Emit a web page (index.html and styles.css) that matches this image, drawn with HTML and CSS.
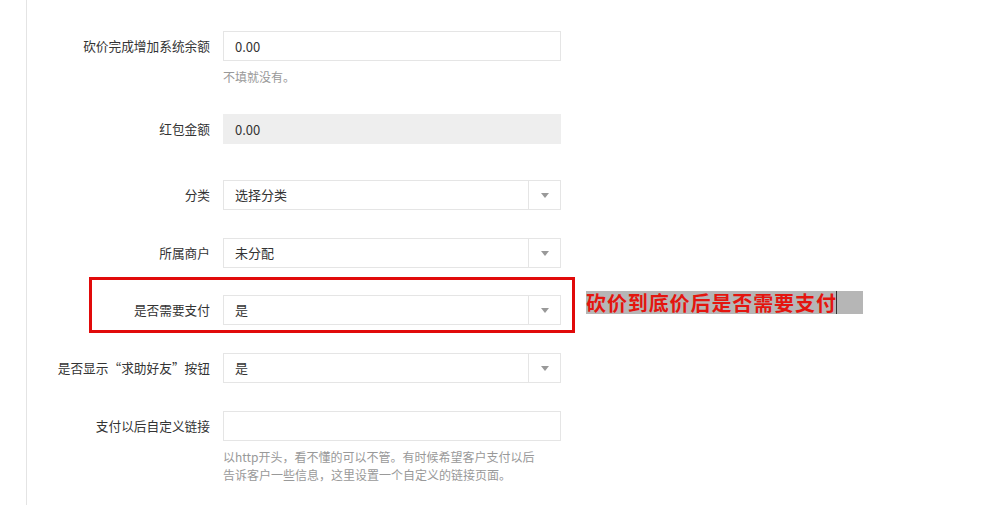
FILE: index.html
```html
<!DOCTYPE html>
<html>
<head>
    <title>砍价设置</title>
    <meta charset="UTF-8">
    <link rel="stylesheet" href="styles.css">
</head>
<body>
    <div class="main">
        <form class="form">
            <div class="form-group">
                <label class="form-label">砍价完成增加系统余额</label>
                <div class="form-field">
                    <input type="text" class="form-input" value="0.00">
                    <div class="help">不填就没有。</div>
                </div>
            </div>

            <div class="form-group group-wide">
                <label class="form-label">红包金额</label>
                <div class="form-field">
                    <input type="text" class="form-input" value="0.00" disabled>
                </div>
            </div>

            <div class="form-group">
                <label class="form-label">分类</label>
                <div class="form-field">
                    <div class="select"><span class="select-text">选择分类</span><span class="select-arrow"></span></div>
                </div>
            </div>

            <div class="form-group group-tight">
                <label class="form-label">所属商户</label>
                <div class="form-field">
                    <div class="select"><span class="select-text">未分配</span><span class="select-arrow"></span></div>
                </div>
            </div>

            <div class="form-group marked">
                <label class="form-label">是否需要支付</label>
                <div class="form-field">
                    <div class="select"><span class="select-text">是</span><span class="select-arrow"></span></div>
                </div>
                <div class="mark-box"></div>
                <div class="mark-note">砍价到底价后是否需要支付<span class="caret"></span></div>
            </div>

            <div class="form-group">
                <label class="form-label">是否显示“求助好友”按钮</label>
                <div class="form-field">
                    <div class="select"><span class="select-text">是</span><span class="select-arrow"></span></div>
                </div>
            </div>

            <div class="form-group">
                <label class="form-label">支付以后自定义链接</label>
                <div class="form-field">
                    <input type="text" class="form-input">
                    <div class="help help-wrap">以http开头，看不懂的可以不管。有时候希望客户支付以后告诉客户一些信息，这里设置一个自定义的链接页面。</div>
                </div>
            </div>
        </form>
    </div>
</body>
</html>
```

FILE: styles.css
```css
/* page */
body {
    margin: 0;
    background: #fff;
    font-family: "Microsoft YaHei", "Noto Sans CJK SC", "Noto Sans", sans-serif;
    color: #333;
}

.main {
    margin-left: 26px;
    height: 505px;
    border-left: 1px solid #e4e4e4;
    overflow: hidden;
}

.form {
    padding-top: 31px;
}

/* rows */
.form-group {
    display: grid;
    grid-template-columns: 183px 338px;
    column-gap: 13px;
    align-items: start;
    margin-bottom: 28px;
}

.group-wide {
    margin-bottom: 36px;
}

.group-tight {
    margin-bottom: 27px;
}

.form-label {
    text-align: right;
    font-size: 12.7px;
    line-height: 30px;
    color: #333;
    white-space: nowrap;
}

/* inputs */
.form-input {
    display: block;
    width: 100%;
    height: 30px;
    padding: 0 11px;
    border: 1px solid #e5e5e5;
    background: #fff;
    font-family: inherit;
    font-size: 13px;
    color: #333;
    box-sizing: border-box;
}

.form-input:disabled {
    background: #eee;
    border-color: #eee;
    color: #333;
}

.help {
    margin-top: 7px;
    font-size: 12px;
    line-height: 18px;
    color: #999;
}

.help-wrap {
    width: 318px;
}

/* select with addon */
.select {
    display: flex;
    height: 30px;
    border: 1px solid #e5e5e5;
    box-sizing: border-box;
}

.select-text {
    flex: 1;
    padding-left: 11px;
    font-size: 13px;
    line-height: 28px;
    color: #333;
}

.select-arrow {
    width: 31px;
    border-left: 1px solid #e5e5e5;
    position: relative;
}

.select-arrow::after {
    content: "";
    position: absolute;
    left: 12px;
    top: 12px;
    border-left: 4px solid transparent;
    border-right: 4px solid transparent;
    border-top: 5px solid #999;
}

/* annotation */
.marked {
    position: relative;
}

.mark-box {
    position: absolute;
    left: 62px;
    top: -18px;
    width: 486px;
    height: 56px;
    border: 3px solid #e10a0a;
    box-sizing: border-box;
}

.mark-note {
    position: absolute;
    left: 559px;
    top: -4px;
    width: 277px;
    height: 23px;
    background: #b6b6b6;
    color: #e4150f;
    font-size: 20px;
    font-weight: bold;
    line-height: 23px;
    letter-spacing: 0.9px;
    white-space: nowrap;
}

.caret {
    display: inline-block;
    width: 1px;
    height: 23px;
    background: #333;
    vertical-align: top;
    margin-left: -1px;
}
```
